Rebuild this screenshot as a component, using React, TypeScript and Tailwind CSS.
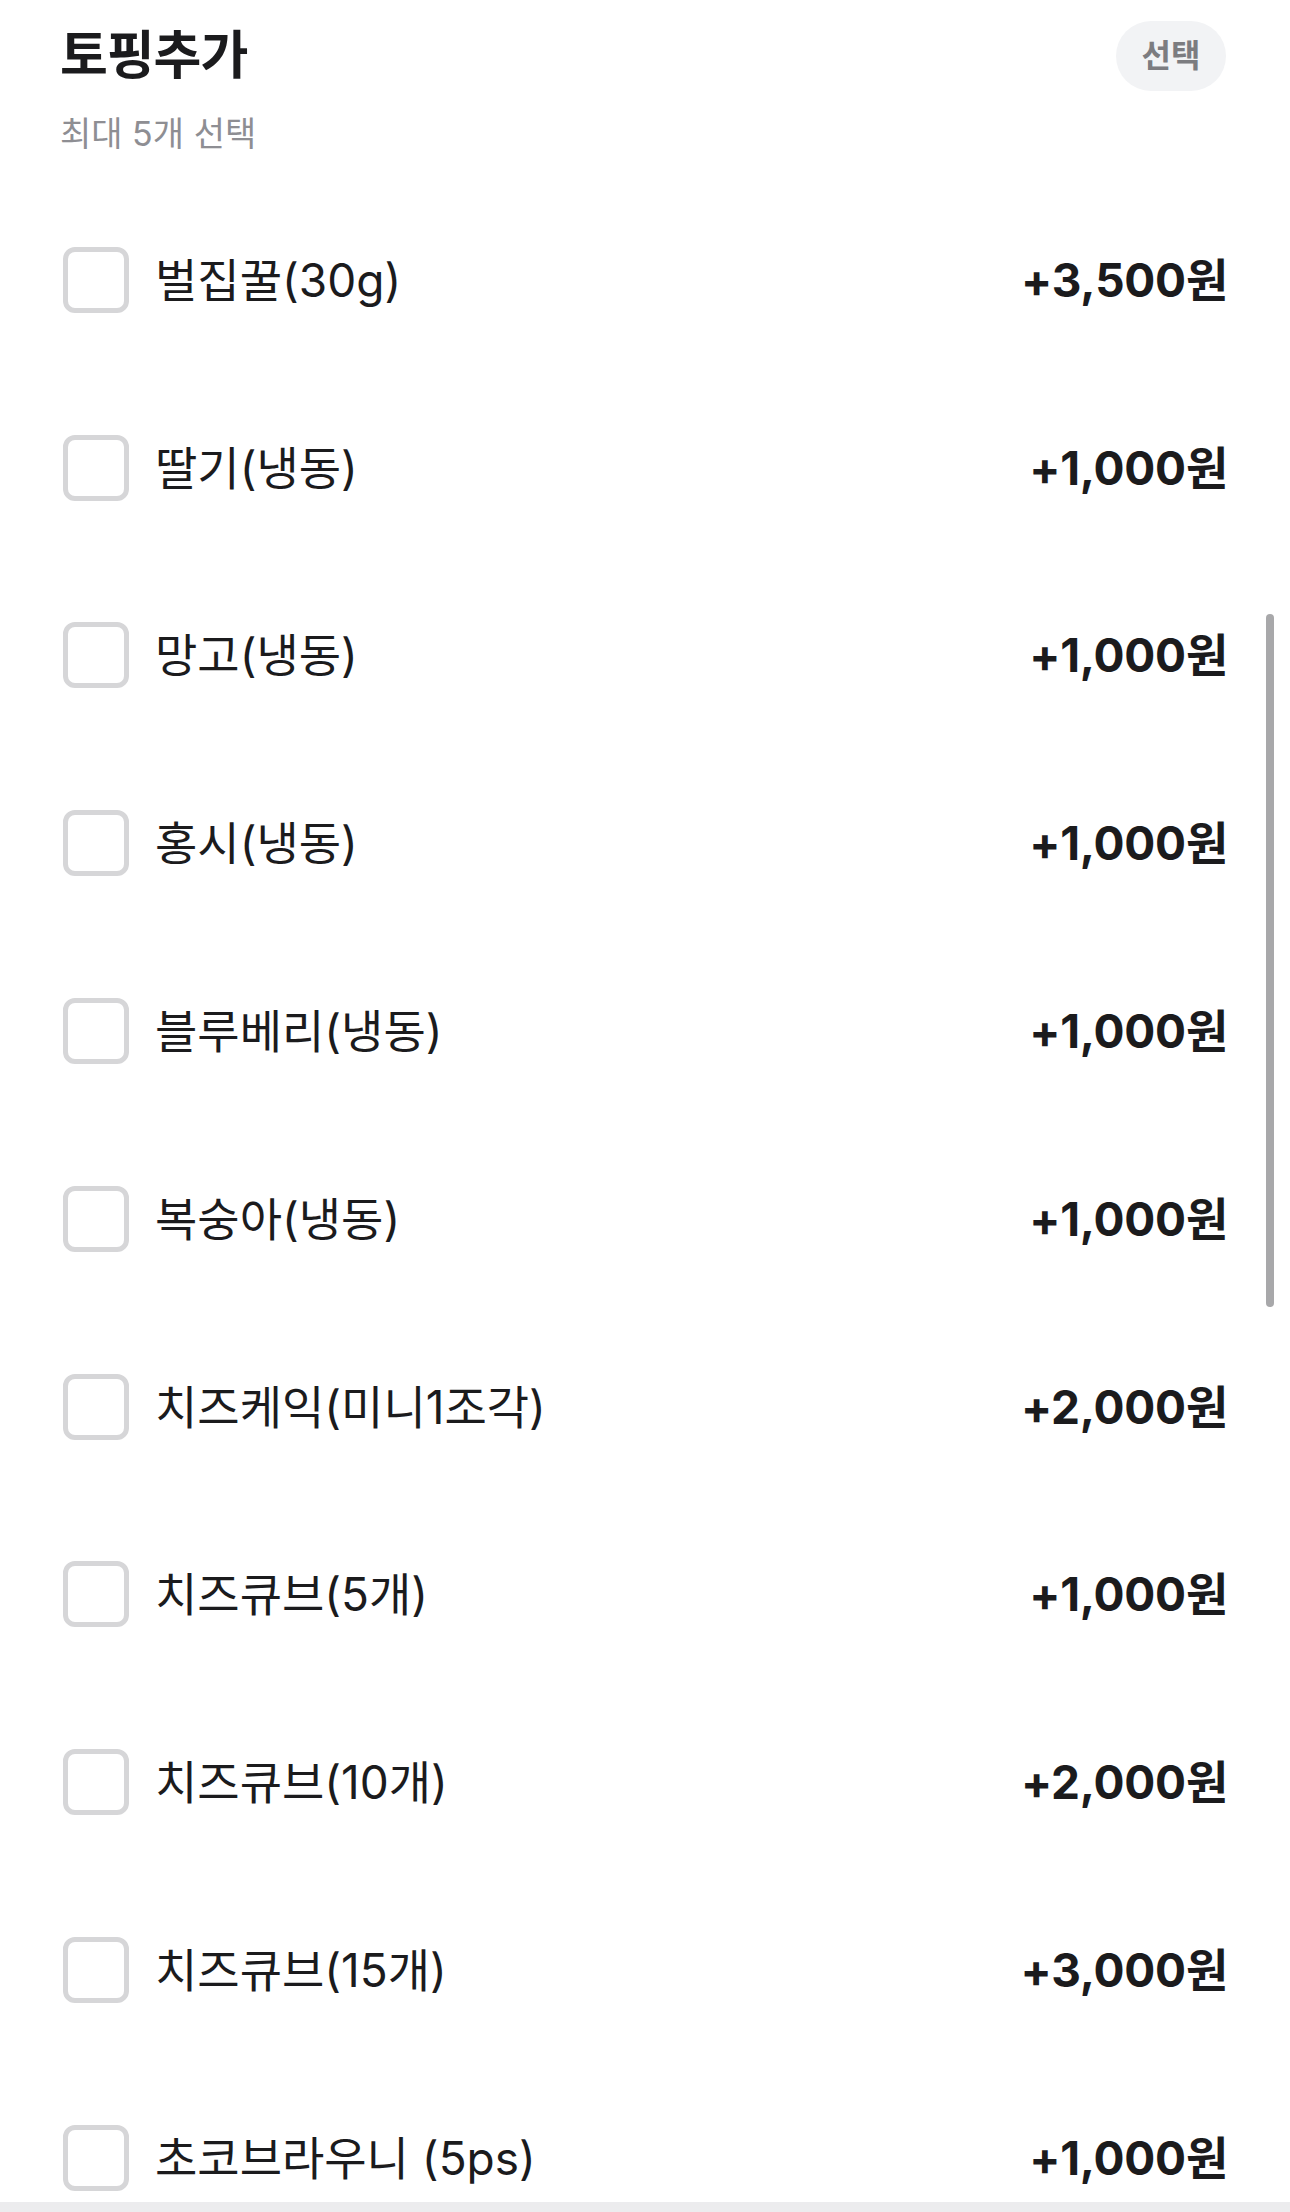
const toppings = [
  { name: '벌집꿀(30g)', price: '+3,500원' },
  { name: '딸기(냉동)', price: '+1,000원' },
  { name: '망고(냉동)', price: '+1,000원' },
  { name: '홍시(냉동)', price: '+1,000원' },
  { name: '블루베리(냉동)', price: '+1,000원' },
  { name: '복숭아(냉동)', price: '+1,000원' },
  { name: '치즈케익(미니1조각)', price: '+2,000원' },
  { name: '치즈큐브(5개)', price: '+1,000원' },
  { name: '치즈큐브(10개)', price: '+2,000원' },
  { name: '치즈큐브(15개)', price: '+3,000원' },
  { name: '초코브라우니 (5ps)', price: '+1,000원' },
];

export default function App() {
  return (
    <div className="relative flex h-[2212px] w-full flex-col overflow-hidden bg-white font-['Inter','Noto_Sans_CJK_KR',sans-serif] text-[#1b1b1d]">
      {/* Header */}
      <div className="flex items-start justify-between pl-[60px] pr-[64px] pt-[21px]">
        <div>
          <h1 className="text-[52px] font-bold leading-[70px] tracking-[-0.02em]">토핑추가</h1>
          <p className="mt-[21px] text-[34px] leading-[44px] text-[#8e8e93]">최대 5개 선택</p>
        </div>
        <div className="flex h-[70px] w-[110px] items-center justify-center rounded-full bg-[#f2f3f5] text-[32px] font-bold text-[#7c7c80]">
          선택
        </div>
      </div>

      {/* Options */}
      <ul className="mt-[30px] flex-1 overflow-hidden pl-[63px] pr-[62px]">
        {toppings.map((item) => (
          <li key={item.name} className="flex h-[187.8px] items-center justify-between">
            <div className="flex items-center gap-[26px]">
              <span className="h-[66px] w-[66px] rounded-[12px] border-[5px] border-[#d6d6d8] bg-white" />
              <span className="text-[46px] leading-none">{item.name}</span>
            </div>
            <span className="text-[46px] font-bold leading-none tracking-[-0.005em]">{item.price}</span>
          </li>
        ))}
      </ul>

      <div className="h-[10px] w-full bg-[#ececee]" />

      {/* Scroll indicator */}
      <div className="absolute right-[16px] top-[614px] h-[693px] w-[8px] rounded-full bg-[#a8a8aa]" />
    </div>
  );
}
